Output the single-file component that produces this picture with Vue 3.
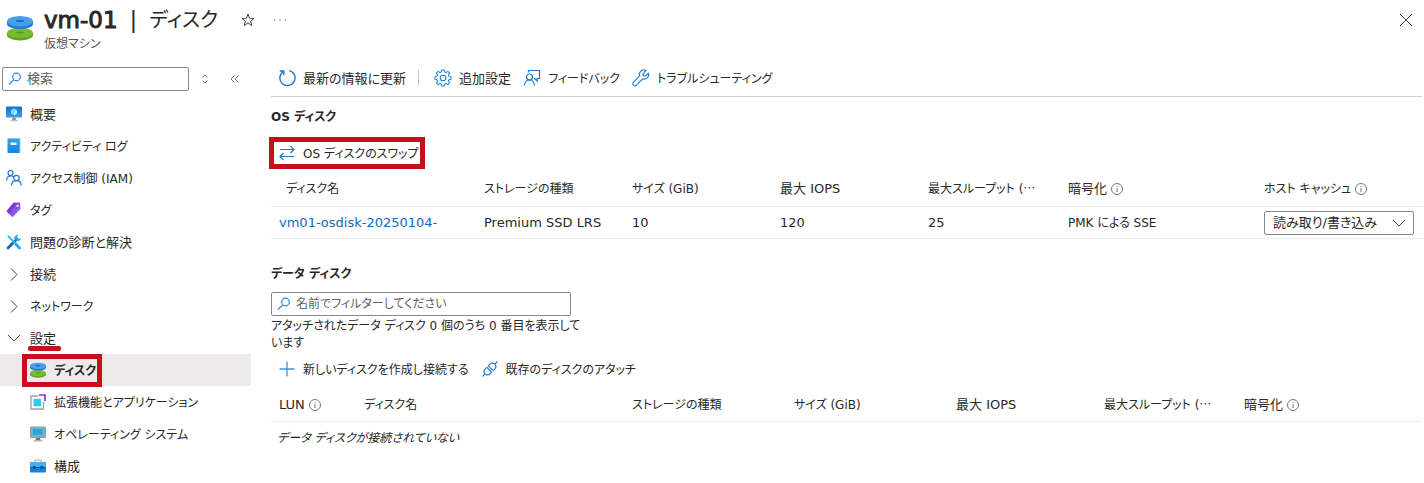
<script setup>
import { ref } from 'vue'

const menuQuery = ref('')
const diskQuery = ref('')
const hostCache = ref('rw')

const menu = [
  { label: '概要', icon: 'monitor' },
  { label: 'アクティビティ ログ', icon: 'log', kana: true },
  { label: 'アクセス制御 (IAM)', icon: 'people', kana: true },
  { label: 'タグ', icon: 'tag', kana: true },
  { label: '問題の診断と解決', icon: 'tools' },
  { label: '接続', icon: 'right' },
  { label: 'ネットワーク', icon: 'right', kana: true },
  { label: '設定', icon: 'down', underlined: true },
  { label: 'ディスク', icon: 'disk', child: true, active: true, kana: true },
  { label: '拡張機能とアプリケーション', icon: 'extension', child: true, kana: true },
  { label: 'オペレーティング システム', icon: 'os', child: true, kana: true },
  { label: '構成', icon: 'toolbox', child: true },
]
</script>

<template>
  <svg class="defs" aria-hidden="true">
    <defs>
      <linearGradient id="blue" x1="0" y1="0" x2="0" y2="1">
        <stop offset="0" stop-color="#0f6fd0" />
        <stop offset="1" stop-color="#3ea0f2" />
      </linearGradient>
      <linearGradient id="sky" x1="0" y1="0" x2="0" y2="1">
        <stop offset="0" stop-color="#35a4e8" />
        <stop offset="1" stop-color="#1583dc" />
      </linearGradient>
      <linearGradient id="violet" x1="0" y1="0" x2="1" y2="1">
        <stop offset="0" stop-color="#6425c9" />
        <stop offset="1" stop-color="#a67af4" />
      </linearGradient>
      <symbol id="i-disk" viewBox="0 0 24 24">
        <path d="M0 16.500v2.300c0 2.600 5.400 4.700 12 4.700s12-2.100 12-4.700v-2.300z" fill="#5aa51f" />
        <ellipse cx="12" cy="16.500" rx="12" ry="4.800" fill="#76bc2d" />
        <ellipse cx="12" cy="16.200" rx="4" ry="1" fill="#5a9f22" />
        <path d="M0 6v2.300c0 2.600 5.400 4.700 12 4.700s12-2.100 12-4.700V6z" fill="#1f7ad8" />
        <ellipse cx="12" cy="5.800" rx="12" ry="4.800" fill="#4b9df0" />
        <ellipse cx="12" cy="5.600" rx="4" ry="1" fill="#1c68b8" />
      </symbol>
      <symbol id="i-monitor" viewBox="0 0 16 16">
        <rect width="16" height="11" rx="0.600" y="0.500" fill="url(#blue)" />
        <path d="M8 2.300l3 1.700v3.500l-3 1.800-3-1.800V4z" fill="#6fdcfa" />
        <path d="M8 5.700l3-1.700v3.500L8 9.300z" fill="#b5f1ff" />
        <path d="M6.500 11.500h3l.5 3H6z" fill="#8a8a8a" />
        <path d="M4 14.300h8v1H4z" fill="#b7b7b7" />
      </symbol>
      <symbol id="i-log" viewBox="0 0 16 16">
        <path d="M2.500 0.500H14.500V14H2z" fill="#8fcdf0" />
        <path d="M1.500 1.500q0-1 1-1h10.500v14.500H2.500q-1 0-1-1z" fill="url(#sky)" />
        <path d="M13 .5h1v14.500h-1" fill="#5db4e8" />
        <rect x="4.500" y="4.500" width="6" height="2.500" fill="#e8f5ff" />
      </symbol>
      <symbol id="i-people" viewBox="0 0 16 16">
        <g fill="none" stroke="#2573d5" stroke-width="1.200">
          <circle cx="4.500" cy="3" r="2.500" />
          <circle cx="10.500" cy="8" r="2.700" />
          <path d="M.6 10.500C.6 7.500 2.500 5.800 5 5.800c1.200 0 2.200.5 3 1.200M5.500 15.500c.2-3 2.200-4.800 5-4.800s4.600 1.800 4.900 4.800" />
        </g>
      </symbol>
      <symbol id="i-tag" viewBox="0 0 16 16">
        <path d="M7.500.8 14 .5l.5 6.500-8 8.300-6-6z" fill="url(#violet)" />
        <path d="M7.500.8 10 .7 3 11.800.5 9.300z" fill="#6b2fd1" opacity=".6" />
        <circle cx="11.500" cy="3.800" r="1.100" fill="#fff" />
      </symbol>
      <symbol id="i-tools" viewBox="0 0 16 16">
        <path d="M2 14 11 5" stroke="#1267af" stroke-width="2.800" stroke-linecap="round" />
        <path d="M15.500 3.800A4 4 0 0 1 9.500 6.500L8 4.500A4 4 0 0 1 12.500.8L10.800 3l.6 1.800 1.800.5z" fill="#23a9e0" />
        <path d="M3 3l10.500 10.500" stroke="#31c0ec" stroke-width="1.800" />
        <path d="M1 .8l3 1.700.3 2L2.500 4.300z" fill="#31c0ec" />
        <path d="M10 10.500l3.500 3.500" stroke="#23a9e8" stroke-width="2.800" stroke-linecap="round" />
      </symbol>
      <symbol id="i-right" viewBox="0 0 16 16">
        <path d="M5 2.500 11 8.500 5 14.500" fill="none" stroke="#444" />
      </symbol>
      <symbol id="i-down" viewBox="0 0 16 16">
        <path d="M2 5l6 6 6-6" fill="none" stroke="#444" />
      </symbol>
      <symbol id="i-extension" viewBox="0 0 16 16">
        <path d="M8.500 2H1v13h12.500V7.500" fill="none" stroke="#a0a0a0" stroke-width="1.300" />
        <rect x="3.500" y="4.800" width="7.500" height="7.500" fill="#32c8ed" />
        <path d="M9 1h6v6" fill="none" stroke="#7c3ae0" stroke-width="1.700" />
      </symbol>
      <symbol id="i-os" viewBox="0 0 16 16">
        <rect y=".5" width="16" height="11.500" rx=".5" fill="#9b9fa2" />
        <rect x="1.200" y="1.700" width="13.600" height="9" fill="#55bbdc" />
        <path d="M3 3.200h9.500v5.500H3z" fill="#3f9bd0" />
        <path d="M6 12h4l.7 2.500H5.300z" fill="#777" />
        <path d="M3.500 14.300h9v1.200h-9z" fill="#aaa" />
      </symbol>
      <symbol id="i-toolbox" viewBox="0 0 16 16">
        <path d="M5 4V2.200h6V4" fill="none" stroke="#bbb" stroke-width="1.200" />
        <rect y="4" width="16" height="10.500" rx=".7" fill="#1683d9" />
        <path d="M0 4.500q0-.5.5-.5h15q.5 0 .5.500V9H0z" fill="#48aeee" />
        <path d="M0 9h16v1H0z" fill="#0b5ba5" />
        <path d="M3 8h2.500v3H3zM10.500 8H13v3h-2.500z" fill="#07549c" />
      </symbol>
      <symbol id="i-search" viewBox="0 0 16 16">
        <g fill="none" stroke="#2b86d3" stroke-width="1.200">
          <circle cx="9.500" cy="6" r="3.800" />
          <path d="M6.700 8.800 2 13.500" />
        </g>
      </symbol>
      <symbol id="i-info" viewBox="0 0 14 14">
        <circle cx="7" cy="7" r="5.500" fill="none" stroke="#777" />
        <path d="M7 6v4M7 4v1" stroke="#777" />
      </symbol>
      <symbol id="i-refresh" viewBox="0 0 18 18">
        <path d="M11.500 1.600A7.600 7.600 0 1 1 5.400 2.500M1.800 2h4v4.300" fill="none" stroke="#1474c8" stroke-width="1.300" />
      </symbol>
      <symbol id="i-gear" viewBox="0 0 18 18">
        <g fill="none" stroke="#2582d2" stroke-width="1.100" stroke-linejoin="round">
          <path d="M7.700 1h2.600l.4 2 1.400.6 1.700-1.200 1.800 1.800-1.200 1.700.6 1.400 2 .4v2.600l-2 .4-.6 1.400 1.200 1.700-1.800 1.800-1.700-1.200-1.400.6-.4 2H7.700l-.4-2-1.400-.6-1.700 1.200-1.800-1.800 1.200-1.700-.6-1.400-2-.4V7.700l2-.4.6-1.400-1.200-1.700 1.800-1.800 1.700 1.200L7.300 3z" />
          <circle cx="9" cy="9" r="2.800" />
        </g>
      </symbol>
      <symbol id="i-feedback" viewBox="0 0 18 18">
        <g fill="none" stroke="#1877ca" stroke-width="1.200">
          <circle cx="6.500" cy="8" r="3" />
          <path d="M1.500 16.500c.3-3.200 2.300-5.500 5-5.500s4.700 2.300 5 5.500M5.500 3.500V1.500h11v8h-2.300v2.500l-2.500-2.500h-1" />
        </g>
      </symbol>
      <symbol id="i-wrench" viewBox="0 0 18 18">
        <path d="M16.500 4.200 13.300 7l-2-.3-.3-2L14 1.600c-2-1-4.300-.6-5.600 1-1 1.200-1.200 2.800-.7 4.300L1.500 13.200c-1.900 2 1 4.800 3 3l6.300-6.300c3.500 1 6.800-2 5.700-5.700z" fill="none" stroke="#2582d2" stroke-width="1.200" stroke-linejoin="round" />
      </symbol>
      <symbol id="i-swap" viewBox="0 0 18 18">
        <path d="M2 5.500h14M12.500 2l3.500 3.500L12.500 9M16 12.500H2M5.500 9 2 12.500 5.500 16" fill="none" stroke="#2379ca" stroke-width="1.200" />
      </symbol>
      <symbol id="i-plus" viewBox="0 0 18 18">
        <path d="M9 1.500v15M1.500 9h15" stroke="#3d94dd" stroke-width="1.300" />
      </symbol>
      <symbol id="i-plug" viewBox="0 0 18 18">
        <g fill="none" stroke="#2582d2" stroke-width="1.200" stroke-linejoin="round">
          <path d="M1.500 16.500 4 14M14 4l2.500-2.500" />
          <path d="M5.800 7.300l4.900 4.900-1.400 1.400c-1.500 1.500-3.700 1.600-5.100.2s-1.300-3.600.2-5.100z" />
          <path d="M7.300 5.800l4.900 4.900 1.400-1.400c1.500-1.500 1.600-3.700.2-5.100s-3.600-1.300-5.100.2z" />
        </g>
      </symbol>
    </defs>
  </svg>

  <div class="page">
    <header class="head">
      <svg class="head-icon"><use href="#i-disk" /></svg>
      <div class="head-text">
        <div class="title-row">
          <h1><span class="vm">vm-01</span><span>|</span><span class="blade">ディスク</span></h1>
          <button class="plain" aria-label="お気に入り">
            <svg class="s14" viewBox="0 0 14 14"><path d="M7 1l1.600 4.300 4.500.1-3.500 2.800 1.200 4.400L7 10l-3.800 2.600 1.200-4.400L.9 5.400l4.500-.1z" fill="none" stroke="#444" /></svg>
          </button>
          <button class="plain more" aria-label="その他">
            <svg class="s14" viewBox="0 0 14 14"><path d="M1 7h1.200M6.400 7h1.200M11.800 7H13" stroke="#555" stroke-width="1.200" /></svg>
          </button>
        </div>
        <p class="sub">仮想マシン</p>
      </div>
      <button class="plain close" aria-label="閉じる">
        <svg class="s14" viewBox="0 0 14 14"><path d="M1 1l12 12M13 1 1 13" stroke="#444" /></svg>
      </button>
    </header>

    <div class="body">
      <nav class="side">
        <div class="side-search">
          <label class="field grow">
            <svg class="s16"><use href="#i-search" /></svg>
            <input v-model="menuQuery" type="text" placeholder="検索" aria-label="検索" />
          </label>
          <button class="plain" aria-label="展開">
            <svg class="s12" viewBox="0 0 12 12"><path d="M3.500 4.500 6 2l2.500 2.500M3.500 7.500 6 10l2.500-2.500" fill="none" stroke="#777" /></svg>
          </button>
          <button class="plain" aria-label="折りたたむ">
            <svg class="s12" viewBox="0 0 12 12"><path d="M5.500 2.500 2 6l3.500 3.500M9.500 2.500 6 6l3.500 3.500" fill="none" stroke="#777" /></svg>
          </button>
        </div>
        <ul class="menu">
          <li v-for="m in menu" :key="m.label">
            <a href="#" :class="{ child: m.child, active: m.active }">
              <svg class="s16"><use :href="'#i-' + m.icon" /></svg>
              <span class="label" :class="{ underlined: m.underlined, kana: m.kana }">{{ m.label }}</span>
            </a>
          </li>
        </ul>
      </nav>

      <main>
        <div class="toolbar">
          <button class="cmd"><svg class="s18"><use href="#i-refresh" /></svg><span class="label">最新の情報に更新</span></button>
          <span class="sep"></span>
          <button class="cmd"><svg class="s18"><use href="#i-gear" /></svg><span class="label">追加設定</span></button>
          <button class="cmd"><svg class="s18"><use href="#i-feedback" /></svg><span class="label kana">フィードバック</span></button>
          <button class="cmd"><svg class="s18"><use href="#i-wrench" /></svg><span class="label kana">トラブルシューティング</span></button>
        </div>

        <h2>OS ディスク</h2>
        <button class="cmd swap"><svg class="s18"><use href="#i-swap" /></svg><span class="label kana">OS ディスクのスワップ</span></button>
        <table>
          <colgroup>
            <col /><col class="w148" /><col class="w148" /><col class="w148" /><col class="w140" /><col class="w196" /><col class="w166" />
          </colgroup>
          <thead>
            <tr>
              <th class="sortable kana">ディスク名</th>
              <th class="kana">ストレージの種類</th>
              <th class="kana">サイズ (GiB)</th>
              <th>最大 IOPS</th>
              <th class="kana">最大スループット (<span class="dots">…</span></th>
              <th>暗号化<svg class="s14"><use href="#i-info" /></svg></th>
              <th class="kana">ホスト キャッシュ<svg class="s14"><use href="#i-info" /></svg></th>
            </tr>
          </thead>
          <tbody>
            <tr>
              <td><a class="link" href="#">vm01-osdisk-20250104-</a></td>
              <td>Premium SSD LRS</td>
              <td>10</td>
              <td>120</td>
              <td>25</td>
              <td class="kana">PMK による SSE</td>
              <td class="pick">
                <div class="select">
                  <select v-model="hostCache" aria-label="ホスト キャッシュ">
                    <option value="rw">読み取り/書き込み</option>
                  </select>
                  <svg class="s16"><use href="#i-down" /></svg>
                </div>
              </td>
            </tr>
          </tbody>
        </table>

        <h2 class="data-title">データ ディスク</h2>
        <div class="filter kana">
          <label class="field">
            <svg class="s16"><use href="#i-search" /></svg>
            <input v-model="diskQuery" type="text" placeholder="名前でフィルターしてください" aria-label="名前でフィルターしてください" />
          </label>
          <p>アタッチされたデータ ディスク 0 個のうち 0 番目を表示して<br />います</p>
        </div>
        <div class="toolbar2">
          <button class="cmd"><svg class="s18"><use href="#i-plus" /></svg><span class="label kana">新しいディスクを作成し接続する</span></button>
          <button class="cmd"><svg class="s18"><use href="#i-plug" /></svg><span class="label kana">既存のディスクのアタッチ</span></button>
        </div>
        <table class="data">
          <colgroup>
            <col class="w85" /><col /><col class="w162" /><col class="w162" /><col class="w148" /><col class="w140" /><col class="w186" />
          </colgroup>
          <thead>
            <tr>
              <th>LUN<svg class="s14"><use href="#i-info" /></svg></th>
              <th class="kana">ディスク名</th>
              <th class="kana">ストレージの種類</th>
              <th class="kana">サイズ (GiB)</th>
              <th>最大 IOPS</th>
              <th class="kana">最大スループット (<span class="dots">…</span></th>
              <th>暗号化<svg class="s14"><use href="#i-info" /></svg></th>
            </tr>
          </thead>
          <tbody>
            <tr><td class="empty kana" colspan="7">データ ディスクが接続されていない</td></tr>
          </tbody>
        </table>
      </main>
    </div>
  </div>
</template>

<style>
body {
  background: #fff;
}
</style>

<style scoped>
.page {
  font-family: "DejaVu Sans", "Noto Sans CJK JP", sans-serif;
  font-size: 13px;
  line-height: 16px;
  font-feature-settings: "palt";
  color: #292827;
}
.page *,
.page *::after {
  box-sizing: border-box;
}
.defs {
  position: absolute;
  width: 0;
  height: 0;
}
svg {
  flex: none;
}
.s12 { width: 12px; height: 12px; }
.s14 { width: 14px; height: 14px; }
.s16 { width: 16px; height: 16px; }
.s18 { width: 18px; height: 18px; }
h1, h2, p, ul {
  margin: 0;
  padding: 0;
}
button, input, select {
  font: inherit;
  font-feature-settings: inherit;
  color: inherit;
  margin: 0;
  padding: 0;
  border: 0;
  background: none;
}
.kana {
  font-size: 12px;
}
.label {
  padding-top: 2px;
}
.plain {
  display: flex;
}
.head {
  display: flex;
  align-items: flex-start;
  height: 64px;
  padding: 6px 11px 0 7px;
}
.head-icon {
  width: 26px;
  height: 26px;
  margin-top: 9px;
}
.head-text {
  flex: 1;
  padding-left: 11px;
}
.title-row {
  display: flex;
  align-items: center;
  height: 28px;
}
h1 {
  display: flex;
  gap: 12px;
  margin-right: 23px;
  font-size: 23px;
  line-height: 28px;
  font-weight: 400;
  white-space: nowrap;
}
.vm {
  -webkit-text-stroke: 1px #292827;
}
.blade {
  font-size: 20px;
}
.more {
  margin-left: 18px;
}
.sub {
  margin-top: 2px;
  font-size: 12px;
  color: #555;
}
.close {
  margin-top: 7px;
}
.body {
  display: flex;
}
.side {
  flex: none;
  width: 251px;
}
.side-search {
  display: flex;
  align-items: center;
  gap: 18px;
  padding: 3px 10px 0 2px;
}
.field {
  display: flex;
  align-items: center;
  gap: 4px;
  height: 24px;
  padding: 0 4px;
  border: 1px solid #8a8886;
  border-radius: 2px;
}
.grow {
  flex: 1;
  min-width: 0;
  margin-right: -8px;
}
.field input {
  flex: 1;
  min-width: 0;
  outline: 0;
}
.field input::placeholder {
  color: #605e5c;
  opacity: 1;
}
.menu {
  margin-top: 7px;
  list-style: none;
}
.menu a {
  position: relative;
  display: flex;
  align-items: center;
  gap: 8px;
  height: 32px;
  padding-left: 6px;
  color: inherit;
  text-decoration: none;
}
.menu a.child {
  padding-left: 30px;
}
.menu a.active {
  background: #edebe9;
  font-weight: 700;
}
.active::after {
  content: "";
  position: absolute;
  left: 22px;
  top: 0;
  width: 80px;
  height: 33px;
  border: 5px solid #c50f1a;
}
.underlined {
  position: relative;
}
.underlined::after {
  content: "";
  position: absolute;
  left: -2px;
  right: -5px;
  bottom: -4px;
  height: 5px;
  border-radius: 2px;
  background: #c50f1a;
}
main {
  flex: 1;
  min-width: 0;
  padding: 0 2px 0 20px;
}
.toolbar {
  display: flex;
  align-items: center;
  height: 33px;
  padding: 0 0 4px 7px;
  border-bottom: 1px solid #d2d0ce;
}
.toolbar .cmd {
  margin-right: 12px;
}
.cmd {
  display: flex;
  align-items: center;
  gap: 7px;
  white-space: nowrap;
}
.sep {
  width: 1px;
  height: 16px;
  margin-right: 15px;
  background: #c8c6c4;
}
h2 {
  font-size: 12px;
  line-height: 20px;
  font-weight: 700;
}
.toolbar + h2 {
  margin: 10px 0;
}
.swap {
  height: 32px;
  margin-left: -2px;
  padding: 0 6px 0 9px;
  box-shadow: inset 0 0 0 5px #c50f1a;
}
table {
  width: 100%;
  table-layout: fixed;
  border-collapse: separate;
  border-spacing: 0;
}
.w85 { width: 85px; }
.w140 { width: 140px; }
.w148 { width: 148px; }
.w162 { width: 162px; }
.w166 { width: 166px; }
.w186 { width: 186px; }
.w196 { width: 196px; }
th, td {
  height: 32px;
  padding: 0 0 0 8px;
  border-bottom: 1px solid #edebe9;
  text-align: left;
  font-weight: 400;
  white-space: nowrap;
}
th {
  height: 38px;
  padding-top: 2px;
}
th svg {
  margin-left: 3px;
  vertical-align: -3px;
}
th.sortable {
  padding-left: 15px;
}
.dots {
  font-family: "Noto Sans CJK JP", sans-serif;
}
.link {
  color: #0f6cbd;
  text-decoration: none;
}
.pick {
  padding-right: 8px;
}
.select {
  position: relative;
  display: flex;
}
.select select {
  width: 100%;
  height: 24px;
  padding-left: 8px;
  border: 1px solid #8a8886;
  border-radius: 2px;
  appearance: none;
}
.select svg {
  position: absolute;
  right: 7px;
  top: 4px;
  pointer-events: none;
}
.data-title {
  margin: 25px 0 8px;
}
.filter {
  width: 300px;
}
.filter p {
  padding-top: 2px;
  line-height: 17px;
  white-space: nowrap;
}
.toolbar2 {
  display: flex;
  align-items: center;
  gap: 12px;
  height: 34px;
  padding-left: 7px;
}
.data th {
  height: 36px;
}
.data .empty {
  padding-left: 6px;
  border: 0;
  line-height: 20px;
  font-style: italic;
}
</style>
